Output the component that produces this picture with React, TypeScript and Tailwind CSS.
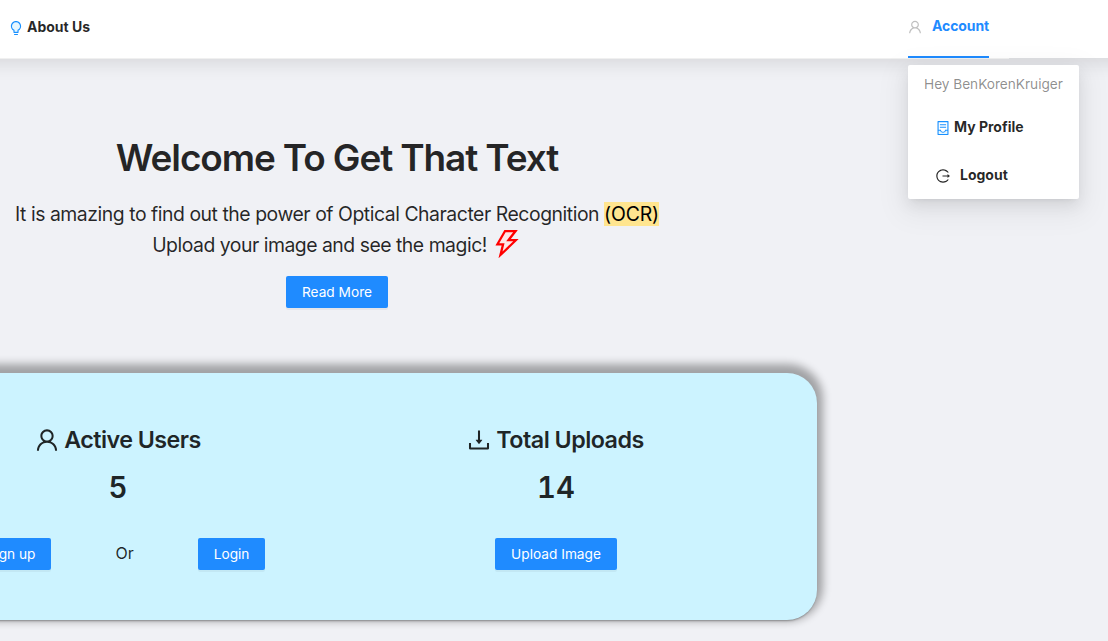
import { AiOutlineUser, AiOutlineLogout, AiOutlineDownload, AiTwotoneBulb, AiTwotoneContainer, AiTwotoneThunderbolt } from "react-icons/ai";
import { ReactNode } from "react";

const box = "64 64 896 896";

function Button({ children }: { children: ReactNode }) {
  return (
    <button className="h-8 shrink-0 whitespace-nowrap rounded-[2px] bg-[#1f8bff] px-4 text-[13.7px] text-white shadow-[0_2px_0_rgba(0,0,0,0.045)]">
      {children}
    </button>
  );
}

function Header() {
  return (
    <header className="-mx-10 flex h-[58px] items-start bg-white px-10 shadow-[0_4px_20px_rgba(0,0,0,0.12)]">
      <nav className="flex h-[59px] w-[1009px] shrink-0 items-start justify-between border-b border-[#f0f0f0] pl-[9px] pr-5">
        <a className="flex h-[53px] items-center gap-1 text-[14px] font-bold">
          <AiTwotoneBulb viewBox={box} className="mt-[3px] size-[14px] text-[#1890ff] [&>path:first-child]:fill-[#e6f7ff]" />
          <span className="leading-5">About Us</span>
        </a>
        <div className="relative w-[81px]">
          <a className="flex h-[58px] items-start gap-[10px] border-b-2 border-[#1f8bff] pt-[15px] text-[14px] font-bold text-[#1f8bff]">
            <AiOutlineUser viewBox={box} className="mt-[5px] size-[14px] shrink-0 text-[#bfbfbf]" />
            <span className="tracking-[-0.1px]">Account</span>
          </a>
          <div className="absolute left-0 top-[65px] h-[134px] w-[171px] rounded-[2px] bg-white shadow-[0_3px_6px_-4px_rgba(0,0,0,0.12),0_6px_16px_rgba(0,0,0,0.08),0_9px_28px_8px_rgba(0,0,0,0.05)]">
            <div className="whitespace-nowrap px-4 pt-2 text-[13.7px] leading-[22px] tracking-[-0.04px] text-black/45">
              Hey BenKorenKruiger
            </div>
            <div className="mt-3 flex h-10 items-center gap-1 pl-7 text-[14px] font-bold">
              <AiTwotoneContainer viewBox={box} className="mt-[2px] size-[14px] text-[#1890ff] [&>path:first-child]:fill-[#e6f7ff]" />
              <span className="mb-px leading-5">My Profile</span>
            </div>
            <div className="mt-2 flex h-10 items-center gap-[10px] pl-7 text-[14px] font-bold">
              <AiOutlineLogout viewBox={box} className="mt-[2px] size-[14px]" />
              <span className="mb-px leading-5">Logout</span>
            </div>
          </div>
        </div>
      </nav>
    </header>
  );
}

interface StatProps {
  icon: ReactNode;
  label: string;
  value: string;
  className: string;
  headingClassName: string;
  children: ReactNode;
}

function Stat({ icon, label, value, className, headingClassName, children }: StatProps) {
  return (
    <div className={`flex w-[439px] flex-col items-center ${className}`}>
      <h3 className={`flex h-8 items-center gap-[5px] whitespace-nowrap text-[24px] font-semibold ${headingClassName}`}>
        {icon}
        <span className="text-[23.3px] tracking-[-0.54px]">{label}</span>
      </h3>
      <div className="mt-3 text-[29.3px] font-semibold leading-10 tabular-nums">{value}</div>
      <div className="mt-[30px] flex items-center gap-16">{children}</div>
    </div>
  );
}

export default function App() {
  return (
    <div className="h-[641px] w-[1108px] overflow-hidden bg-[#f0f1f5] font-['Inter',sans-serif] text-black/85">
      <div className="relative z-10">
        <Header />
      </div>
      <main>
        <section className="flex w-[674px] flex-col items-center pt-[76px] text-center">
          <h1 className="whitespace-nowrap text-[37px] font-semibold leading-[47px] tracking-[-1.13px]">Welcome To Get That Text</h1>
          <p className="mt-[18px] whitespace-nowrap text-[19.4px] leading-[31px] tracking-[-0.46px]">
            It is amazing to find out the power of Optical Character Recognition{" "}
            <mark className="bg-[#ffe58f] tracking-[-0.14px] text-black">(OCR)</mark>
          </p>
          <p className="flex h-[31px] items-center gap-[5px] whitespace-nowrap text-[19.4px] tracking-[-0.49px]">
            <span>Upload your image and see the magic!</span>
            <AiTwotoneThunderbolt viewBox={box} className="mb-[3px] size-[30px] text-[#ff0000] [&>path:first-child]:fill-[#ffe6e6]" />
          </p>
          <div className="mt-[15px] flex"><Button>Read More</Button></div>
        </section>
        <section className="-ml-[143px] mt-[65px] flex h-[247px] w-[960px] rounded-[30px] bg-[#ccf3ff] px-[41px] pt-[51px] shadow-[0_2px_2px_-1px_rgba(0,0,0,0.3),1px_-4px_8px_5px_rgba(0,0,0,0.33)]">
          <Stat icon={<AiOutlineUser viewBox={box} />} label="Active Users" value="5" className="pl-px" headingClassName="">
            <Button>Sign up</Button>
            <span className="mb-[2px] text-[16px]">Or</span>
            <Button>Login</Button>
          </Stat>
          <Stat icon={<AiOutlineDownload viewBox={box} />} label="Total Uploads" value="14" className="pr-px" headingClassName="pr-[1px]">
            <Button>Upload Image</Button>
          </Stat>
        </section>
      </main>
    </div>
  );
}
